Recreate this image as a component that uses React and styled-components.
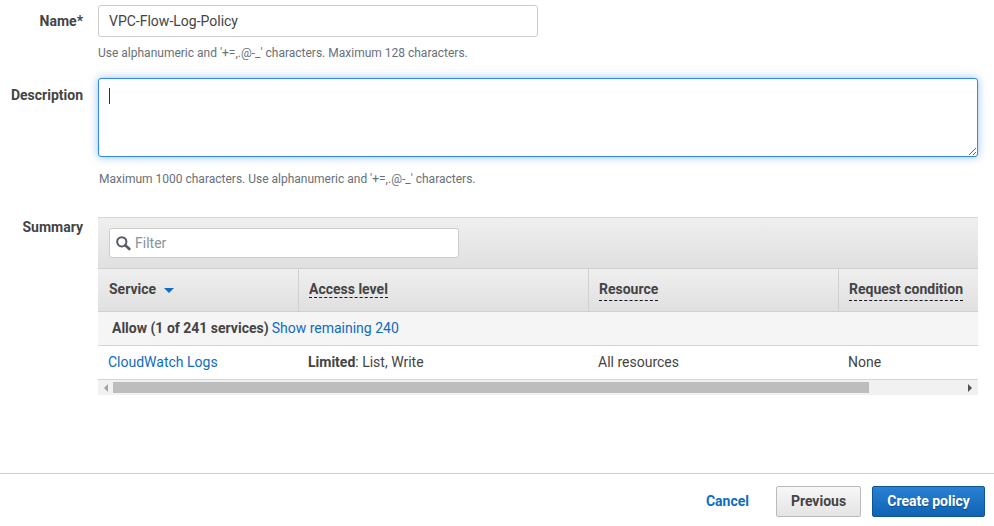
import React from "react";
import styled, { createGlobalStyle } from "styled-components";

const Global = createGlobalStyle`
  html, body { margin: 0; padding: 0; background: #fff; }
  body { font-family: Roboto, "Liberation Sans", sans-serif; font-size: 14px; color: #444; overflow: hidden; }
  * { box-sizing: border-box; }
`;

const Page = styled.div`
  width: 994px;
  height: 526px;
  display: flex;
  flex-direction: column;
  overflow: hidden;
  padding-top: 5px;
`;
const Form = styled.div`
  display: grid;
  grid-template-columns: 84px 880px;
  column-gap: 14px;
  flex: 1;
  align-content: start;
`;
const Label = styled.label`
  font-weight: 700;
  font-size: 14px;
  line-height: 20px;
  color: #444;
  text-align: right;
  padding-right: 1px;
  padding-top: ${(p) => p.$top}px;
`;
const Field = styled.div`
  display: flex;
  flex-direction: column;
  align-items: flex-start;
  margin-bottom: ${(p) => p.$mb}px;
`;
const NameInput = styled.input`
  width: 440px;
  height: 32px;
  border: 1px solid #ccc;
  border-radius: 3px;
  padding: 0 10px;
  font: 14px Roboto, sans-serif;
  color: #444;
  outline: none;
`;
const Hint = styled.div`
  font-size: 12px;
  line-height: 16px;
  color: #687078;
  margin-top: ${(p) => p.$mt}px;
  margin-left: ${(p) => p.$ml || 0}px;
`;
const AreaWrap = styled.div`
  position: relative;
  width: 880px;
  height: 79px;
`;
const Area = styled.textarea`
  display: block;
  width: 100%;
  height: 100%;
  border: 1px solid #2f88ea;
  border-radius: 3px;
  box-shadow: 0 0 8px rgba(42, 132, 232, 0.5);
  outline: none;
  resize: both;
  padding: 0;
  caret-color: transparent;
`;
const Caret = styled.span`
  position: absolute;
  left: 11px;
  top: 10px;
  width: 1px;
  height: 16px;
  background: #333;
`;
const Table = styled.div`
  width: 880px;
  overflow: hidden;
  border-top: 1px solid #d5d5d5;
`;
const FilterBar = styled.div`
  height: 50px;
  display: flex;
  align-items: flex-start;
  padding: 10px 0 0 11px;
  background: linear-gradient(#efefef, #e0e0e0);
`;
const FilterBox = styled.div`
  width: 350px;
  height: 30px;
  background: #fff;
  border: 1px solid #ccc;
  border-radius: 3px;
  display: flex;
  align-items: center;
  gap: 3px;
  padding-left: 6px;
  color: #879596;
  font-size: 14px;
`;
const HeadRow = styled.div`
  display: grid;
  grid-template-columns: 200px 290px 250px 200px;
  height: 44px;
  border-top: 1px solid #d0d0d0;
  border-bottom: 1px solid #d0d0d0;
  background: linear-gradient(#efefef, #e0e0e0);
`;
const HeadCell = styled.div`
  display: flex;
  align-items: center;
  gap: 8px;
  padding-left: ${(p) => (p.$first ? 11 : 10)}px;
  padding-bottom: 2px;
  font-weight: 700;
  color: #444;
  border-left: ${(p) => (p.$first ? "none" : "1px solid #d0d0d0")};
`;
const Dashed = styled.span`
  display: inline-block;
  line-height: 16px;
  border-bottom: 1px dashed #16191f;
  padding-bottom: ${(p) => p.$gap}px;
  margin-top: ${(p) => p.$gap + 1}px;
`;
const SortArrow = styled.span`
  width: 0;
  height: 0;
  border-left: 5px solid transparent;
  border-right: 5px solid transparent;
  border-top: 5px solid #0f6bc4;
  margin-top: 2px;
`;
const GroupRow = styled.div`
  height: 34px;
  display: flex;
  align-items: center;
  gap: 3px;
  padding-left: 14px;
  padding-bottom: 1px;
  background: #f5f5f5;
  border-bottom: 1px solid #d5d5d5;
  font-weight: 700;
`;
const Link = styled.a`
  color: #0f6bc4;
  font-weight: 400;
  text-decoration: none;
`;
const DataRow = styled.div`
  display: grid;
  grid-template-columns: 200px 290px 250px 200px;
  height: 34px;
  align-items: center;
  padding-bottom: 1px;
  border-bottom: 1px solid #d5d5d5;
  color: #444;
`;
const DataCell = styled.div`
  padding-left: 10px;
`;
const ScrollBar = styled.div`
  height: 15px;
  display: flex;
  align-items: center;
  background: #f1f1f1;
`;
const ScrollArrow = styled.div`
  width: 15px;
  display: flex;
  justify-content: center;
  flex: none;
`;
const Tri = styled.span`
  width: 0;
  height: 0;
  border-top: 4px solid transparent;
  border-bottom: 4px solid transparent;
  ${(p) => (p.$left ? "border-right: 4px solid #a3a3a3;" : "border-left: 4px solid #505050; margin-right: 2px;")}
`;
const Track = styled.div`
  flex: 1;
  height: 11px;
`;
const Thumb = styled.div`
  height: 100%;
  background: #bdbdbd;
`;
const Footer = styled.div`
  height: 53px;
  border-top: 1px solid #ccc;
  display: flex;
  align-items: flex-start;
  justify-content: flex-end;
  padding: 12px 9px 0 0;
`;
const Cancel = styled.a`
  color: #0f6bc4;
  font-weight: 700;
  font-size: 14px;
  line-height: 31px;
  margin-right: 27px;
`;
const Button = styled.button`
  height: 31px;
  border-radius: 2px;
  font: 700 14px Roboto, sans-serif;
  padding: 0 0 2px;
  width: ${(p) => p.$w}px;
  margin-right: ${(p) => p.$mr || 0}px;
  border: 1px solid ${(p) => (p.$primary ? "#0e5596" : "#bbb")};
  color: ${(p) => (p.$primary ? "#fff" : "#444")};
  background: ${(p) =>
    p.$primary ? "linear-gradient(#2a80d2, #0f63b4)" : "linear-gradient(#f7f7f7, #e4e4e4)"};
  text-shadow: ${(p) => (p.$primary ? "0 1px 1px rgba(0,0,0,.3)" : "none")};
`;

const SearchIcon = () => (
  <svg width="16" height="16" viewBox="0 0 16 16" fill="none" stroke="#545b64">
    <circle cx="5.8" cy="6.8" r="4.6" strokeWidth="2" />
    <path d="M9.2 10.2 L13.4 14" strokeWidth="2.6" strokeLinecap="round" />
  </svg>
);

export default function App() {
  return (
    <Page>
      <Global />
      <Form>
        <Label $top={6}>Name*</Label>
        <Field $mb={17}>
          <NameInput defaultValue="VPC-Flow-Log-Policy" readOnly />
          <Hint $mt={8}>Use alphanumeric and '+=,.@-_' characters. Maximum 128 characters.</Hint>
        </Field>
        <Label $top={7}>Description</Label>
        <Field $mb={30}>
          <AreaWrap>
            <Area />
            <Caret />
          </AreaWrap>
          <Hint $mt={14} $ml={1}>Maximum 1000 characters. Use alphanumeric and '+=,.@-_' characters.</Hint>
        </Field>
        <Label $top={0}>Summary</Label>
        <Field>
          <Table>
            <FilterBar>
              <FilterBox>
                <SearchIcon />
                Filter
              </FilterBox>
            </FilterBar>
            <HeadRow>
              <HeadCell $first>
                Service <SortArrow />
              </HeadCell>
              <HeadCell><Dashed $gap={0}>Access level</Dashed></HeadCell>
              <HeadCell><Dashed $gap={3}>Resource</Dashed></HeadCell>
              <HeadCell><Dashed $gap={3}>Request condition</Dashed></HeadCell>
            </HeadRow>
            <GroupRow>
              Allow (1 of 241 services) <Link>Show remaining 240</Link>
            </GroupRow>
            <DataRow>
              <DataCell><Link>CloudWatch Logs</Link></DataCell>
              <DataCell><b>Limited</b>: List, Write</DataCell>
              <DataCell>All resources</DataCell>
              <DataCell>None</DataCell>
            </DataRow>
            <ScrollBar>
              <ScrollArrow><Tri $left /></ScrollArrow>
              <Track><Thumb style={{ width: `${(756 / 850) * 100}%` }} /></Track>
              <ScrollArrow><Tri /></ScrollArrow>
            </ScrollBar>
          </Table>
        </Field>
      </Form>
      <Footer>
        <Cancel>Cancel</Cancel>
        <Button $w={85} $mr={11}>Previous</Button>
        <Button $primary $w={113}>Create policy</Button>
      </Footer>
    </Page>
  );
}
